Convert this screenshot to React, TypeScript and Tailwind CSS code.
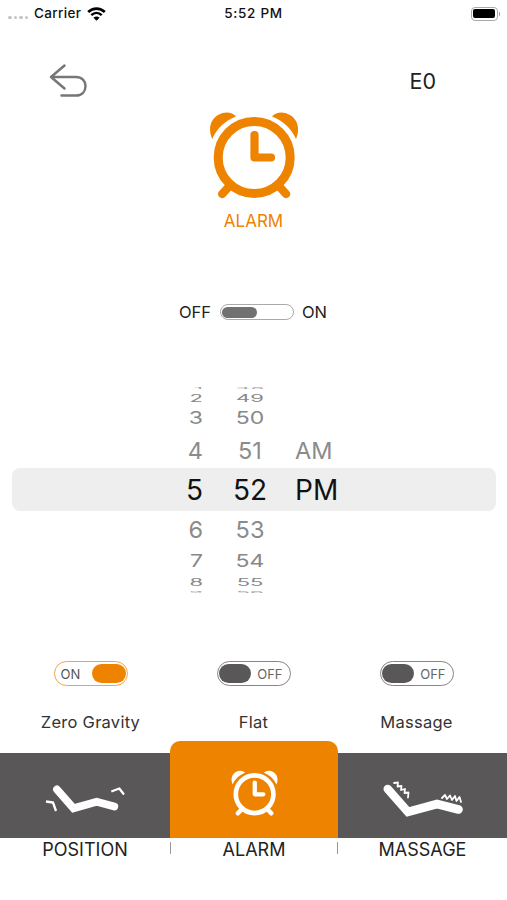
import React from "react";

const PICKER_ROWS = [
  { hour: "1", minute: "48", period: "", row: "h-[5px] text-[23px] text-[#a3a3a3]", scale: "scale-y-[0.1]" },
  { hour: "2", minute: "49", period: "", row: "h-[15px] text-[22px] text-[#888888]", scale: "scale-y-[0.45]" },
  { hour: "3", minute: "50", period: "", row: "h-[26px] text-[23px] text-[#888888]", scale: "scale-y-[0.78]" },
  { hour: "4", minute: "51", period: "AM", row: "h-[37px] pt-[3px] text-[23.5px] text-[#8b8b8b]", scale: "scale-y-100" },
  { hour: "5", minute: "52", period: "PM", row: "h-[43px] pt-px text-[28px] text-[#111111]", scale: "scale-y-100" },
  { hour: "6", minute: "53", period: "", row: "h-[37px] text-[23.5px] text-[#8b8b8b]", scale: "scale-y-100" },
  { hour: "7", minute: "54", period: "", row: "h-[26px] text-[23px] text-[#888888]", scale: "scale-y-[0.78]" },
  { hour: "8", minute: "55", period: "", row: "h-[15px] text-[22px] text-[#888888]", scale: "scale-y-[0.45]" },
  { hour: "9", minute: "56", period: "", row: "h-[5px] text-[23px] text-[#a3a3a3]", scale: "scale-y-[0.1]" },
];

const OPTIONS = [
  { label: "Zero Gravity", on: true },
  { label: "Flat", on: false },
  { label: "Massage", on: false },
];

function AlarmClock({ className }: { className: string }) {
  return (
    <svg viewBox="0 0 90 90" className={className} fill="none" stroke="currentColor" strokeLinecap="round" strokeLinejoin="round">
      <path d="M3.2 28 C-1 18 1 9 9 4 C16 0 23 1 27 5.5 C16 10 8 17 3.2 28Z" fill="currentColor" stroke="none" />
      <path d="M87 28 C91.2 18 89 9 81 4 C74 0 67 1 63 5.5 C74 10 82 17 87 28Z" fill="currentColor" stroke="none" />
      <circle cx="45.2" cy="46.4" r="36" strokeWidth="9" />
      <path d="M45.5 24 V46.5 H62" strokeWidth="8.2" />
      <path d="M20.5 75 L13.2 83 M69.8 75 L77.1 83" strokeWidth="8.4" />
    </svg>
  );
}

function PositionIcon() {
  return (
    <svg viewBox="0 0 80 32" className="h-8 w-20" fill="none" stroke="white" strokeLinecap="round" strokeLinejoin="round">
      <path d="M12 7.5 L28.5 26.3 L51.7 19.8 L69.3 24.5" strokeWidth="7.8" strokeLinejoin="miter" />
      <path d="M1 19.5 L8 20.5 L11 29" strokeWidth="2.3" strokeLinecap="butt" />
      <path d="M66.3 9.5 L74.3 6.5 L79 12.5" strokeWidth="2.3" strokeLinecap="butt" />
    </svg>
  );
}

function MassageIcon() {
  return (
    <svg viewBox="0 0 82 40" className="h-10 w-[82px]" fill="none" stroke="white" strokeLinecap="round" strokeLinejoin="round">
      <path d="M5.8 11 L26 34 L55 26 L76.5 31.5" strokeWidth="8.6" strokeLinejoin="miter" />
      <path d="M12 5 L16 4.5 L15.5 8.5 L19.5 8 L19 12 L23 11 L22.5 15 L26.5 14.5 L26 19.5" strokeWidth="1.8" />
      <path d="M60 20 L63 17 L65 21 L68 17.5 L70 22 L73 18 L74.5 23 L77.5 19 L79 24" strokeWidth="1.8" />
    </svg>
  );
}

function OptionSwitch({ on }: { on: boolean }) {
  if (on) {
    return (
      <button className="flex h-[25px] w-[74px] items-center justify-between rounded-full border-[1.5px] border-[#f3a34a] pr-[1px] pl-1.5">
        <span className="pt-0.5 text-[13px] leading-none text-[#555555]">ON</span>
        <span className="h-[19px] w-[34px] rounded-full bg-[#ee8300]" />
      </button>
    );
  }
  return (
    <button className="flex h-[25px] w-[74px] items-center justify-between rounded-full border-[1.5px] border-[#858585] pr-[7px] pl-[1px]">
      <span className="h-[19px] w-8 rounded-full bg-[#595757]" />
      <span className="pt-0.5 text-[13px] leading-none text-[#666666]">OFF</span>
    </button>
  );
}

function StatusBar() {
  return (
    <div className="grid h-[27px] grid-cols-[1fr_auto_1fr] items-center px-2 text-[13.5px] font-medium text-[#111111]">
      <div className="flex items-center">
        <div className="mt-2 mr-1 flex gap-[2px]">
          <span className="size-[3.5px] rounded-full bg-[#c4c4c4]" />
          <span className="size-[3.5px] rounded-full bg-[#c4c4c4]" />
          <span className="size-[3.5px] rounded-full bg-[#c4c4c4]" />
          <span className="size-[3.5px] rounded-full bg-[#c4c4c4]" />
        </div>
        <span className="ml-0.5 tracking-[0.35px]">Carrier</span>
        <svg viewBox="0 0 19 14" className="ml-1.5 h-3.5 w-[19px]" fill="none" stroke="black">
          <path d="M1.2 5 C6 0.4 13 0.4 17.8 5" strokeWidth="2.7" />
          <path d="M4.3 8.2 C7.4 5.3 11.6 5.3 14.7 8.2" strokeWidth="2.5" />
          <path d="M6.4 10.8 Q9.5 8 12.6 10.8 L9.5 13.8Z" fill="black" stroke="none" />
        </svg>
      </div>
      <span className="tracking-[0.7px]">5:52 PM</span>
      <div className="flex items-center justify-end gap-px">
        <div className="h-[14px] w-[27px] rounded-[4px] border border-[#aaaaaa] p-[1.5px]">
          <div className="h-full w-full rounded-[2px] bg-black" />
        </div>
        <span className="-mr-[1px] h-1 w-[1.5px] rounded-r-full bg-[#999999]" />
      </div>
    </div>
  );
}

export default function App() {
  return (
    <div className="flex h-[900px] w-[507px] flex-col overflow-hidden bg-white font-['Inter',sans-serif] text-[#222222]">
      <StatusBar />

      {/* back button and status code */}
      <header className="flex h-[84px] justify-between pt-[36px] pr-[71px] pl-[49px]">
        <button className="h-[35px] w-[39px]">
          <svg viewBox="0 0 39 35" className="h-[35px] w-[39px]" fill="none" stroke="#777777" strokeWidth="2.5" strokeLinecap="round" strokeLinejoin="round">
            <path d="M15.5 2.5 L2 14 L15.5 25.5 M2 14 H27 C33 14 36.5 18 36.5 23 C36.5 28.5 33 32.5 27 32.5 H12.5" />
          </svg>
        </button>
        <span className="pt-1 text-[21.5px] leading-[28px]">E0</span>
      </header>

      <section className="flex h-[182px] flex-col items-center text-[#ee8300]">
        <AlarmClock className="h-[90px] w-[90px]" />
        <h1 className="mt-2 text-[17px] leading-6">ALARM</h1>
      </section>

      <div className="flex h-[38px] items-center pl-[179px] text-[16.5px]">
        <span className="w-[41px]">OFF</span>
        <button className="flex h-4 w-[74px] items-center rounded-full border-[1.5px] border-[#aaaaaa] pl-px">
          <span className="h-[11px] w-[35px] rounded-full bg-[#717171]" />
        </button>
        <span className="ml-2">ON</span>
      </div>

      {/* time wheel */}
      <section className="mt-[54px] h-[209px] px-3">
        {PICKER_ROWS.map((item) => (
          <div
            key={item.hour}
            className={`grid grid-cols-[191px_22px_50px_1fr] content-center items-center rounded-lg leading-[0] ${item.row} ${item.period === "PM" ? "-mr-px bg-[#eeeeee]" : ""}`}
          >
            <span className={`text-right ${item.scale}`}>{item.hour}</span>
            <span />
            <span className={`text-center ${item.scale}`}>{item.minute}</span>
            <span className="pl-5">{item.period}</span>
          </div>
        ))}
      </section>

      <section className="mt-[67px] flex h-[80px] justify-center gap-[3px]">
        {OPTIONS.map((option) => (
          <div key={option.label} className="flex w-40 flex-col items-center">
            <OptionSwitch on={option.on} />
            <span className="mt-[23.5px] text-[16.5px] leading-6 tracking-[0.25px] text-[#333333]">{option.label}</span>
          </div>
        ))}
      </section>

      {/* bottom navigation */}
      <nav className="grid grid-cols-[170px_168px_169px] text-center text-[18px] leading-6">
        <div>
          <div className="mt-3 flex h-[85px] items-center justify-center bg-[#595757] pt-1">
            <PositionIcon />
          </div>
          <div>POSITION</div>
        </div>
        <div>
          <div className="flex h-[97px] items-center justify-center rounded-t-[10px] bg-[#ee8300] pt-[7px] text-white">
            <AlarmClock className="h-[47px] w-[47px]" />
          </div>
          <div className="flex justify-between">
            <span className="mt-1 h-3 w-px bg-[#999999]" />
            <span>ALARM</span>
            <span className="mt-1 h-3 w-px bg-[#999999]" />
          </div>
        </div>
        <div>
          <div className="mt-3 flex h-[85px] items-center justify-center bg-[#595757] pt-1">
            <MassageIcon />
          </div>
          <div>MASSAGE</div>
        </div>
      </nav>
    </div>
  );
}
